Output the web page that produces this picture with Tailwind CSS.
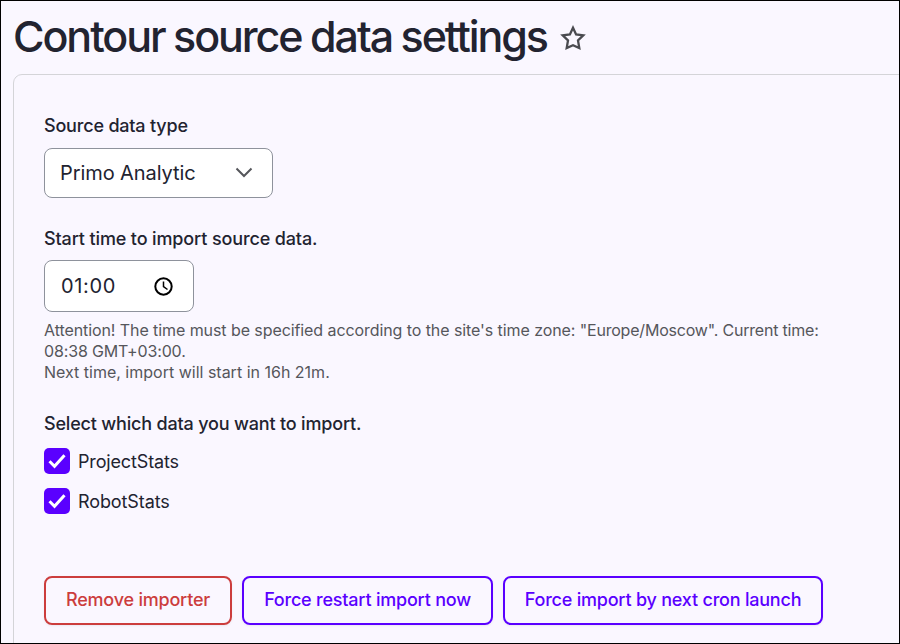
<!DOCTYPE html>
<html lang="en"><head><meta charset="utf-8"><title>Contour source data settings</title>
<script src="https://cdn.jsdelivr.net/npm/@tailwindcss/browser@4"></script></head>
<body class="w-[900px] h-[644px] overflow-hidden bg-[#faf7ff] font-['Inter',sans-serif] text-[#222330]">
<div class="w-[900px] h-[644px] border border-black overflow-hidden pl-[12px]">
<header class="h-[73px] flex items-center">
<h1 class="w-[535px] pb-[3px] text-[43px] leading-[70px] font-medium tracking-[-2.080px] [word-spacing:-0.8px] whitespace-nowrap">Contour source data settings</h1>
<svg class="ml-[12px] size-[26px]" viewBox="0 0 26 26" fill="none" stroke="#4a4b50" stroke-width="2.300"><path d="M13 2.800l3.100 6.700 7.200.9-5.300 5.100 1.300 7.500-6.300-2.700-6.300 2.700 1.300-7.500-5.300-5.100 7.200-.9z"/></svg>
</header>
<main class="h-[600px] w-[920px] border border-[#d4d4d8] rounded-tl-[9px] pl-[30px] pt-[38px]">
<label class="block h-[35px] text-[18px] leading-[25px] font-medium tracking-[-0.190px]">Source data type</label>
<div class="w-[229px] h-[50px] bg-white border border-[#8e929c] rounded-[8px] flex items-center justify-between pl-[15px] pr-[19px] text-[20px]"><span class="tracking-[-0.080px]">Primo Analytic</span><svg class="w-[18px] h-[11px] mb-[2px]" viewBox="0 0 18 11" fill="none" stroke="#55565b" stroke-width="2"><path d="M1.500 1.500l7.500 7.500 7.500-7.500"/></svg></div>
<label class="block mt-[28px] h-[34px] text-[18px] leading-[25px] font-medium tracking-[-0.130px]">Start time to import source data.</label>
<div class="w-[150px] h-[52px] bg-white border border-[#8e929c] rounded-[8px] flex items-center justify-between pl-[16px] pr-[20px] text-[20px]"><span class="tracking-[0.65px]">01:00</span><svg class="size-[19px]" viewBox="0 0 19 19" fill="none" stroke="#000"><circle cx="9.500" cy="9.500" r="8.200" stroke-width="2"/><path stroke-width="1.500" d="M9.500 4.500v5l4 3"/></svg></div>
<p class="mt-[8px] text-[16px] leading-[21px] text-[#55565b] whitespace-nowrap"><span class="tracking-[-0.080px]">Attention! The time must be specified according to the site's time zone: </span><span class="tracking-[-0.200px]">"Europe/Moscow". Current time:</span><br><span class="tracking-[-0.15px]">08:38 GMT+03:00.</span><br>Next time, import will start in 16h 21m.</p>
<div class="mt-[28px] text-[18px] leading-[25px] font-medium tracking-[-0.180px]">Select which data you want to import.</div>
<div class="mt-[12px] h-[26px] flex items-start gap-2 text-[18px] tracking-[-0.15px]"><span class="size-[26px] rounded-[5px] bg-[#5a00ff]"><svg viewBox="0 0 26 26" fill="none" stroke="#fff" stroke-width="3"><path d="M5.500 13.300l5 5 10-11.100"/></svg></span><span class="leading-[28px]">ProjectStats</span></div>
<div class="mt-[14px] h-[26px] flex items-start gap-2 text-[18px] tracking-[-0.1px]"><span class="size-[26px] rounded-[5px] bg-[#5a00ff]"><svg viewBox="0 0 26 26" fill="none" stroke="#fff" stroke-width="3"><path d="M5.500 13.300l5 5 10-11.100"/></svg></span><span class="leading-[28px]">RobotStats</span></div>
<div class="mt-[62px] flex gap-[10px] text-[18px] font-medium text-[#5a00ff] tracking-[-0.210px] whitespace-nowrap">
<button class="w-[188px] h-[49px] pb-[2px] border-2 border-[#cc3d3d] text-[#cc3d3d] rounded-[8px] shadow-sm shadow-black/5">Remove importer</button>
<button class="w-[251px] h-[49px] pb-[2px] border-2 border-[#5a00ff] rounded-[8px] shadow-sm shadow-black/5">Force restart import now</button>
<button class="w-[320px] h-[49px] pb-[2px] border-2 border-[#5a00ff] rounded-[8px] shadow-sm shadow-black/5">Force import by next cron launch</button>
</div></main></div></body></html>
